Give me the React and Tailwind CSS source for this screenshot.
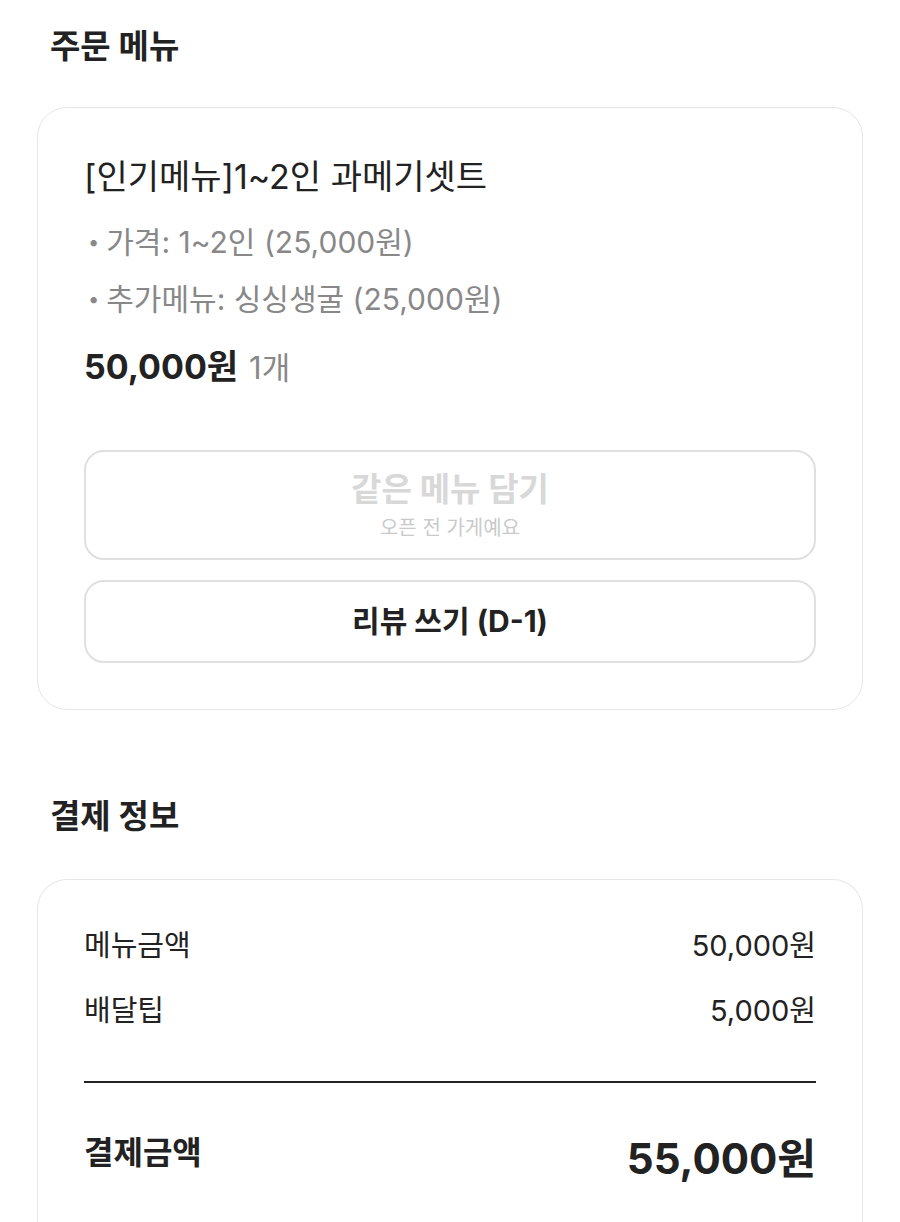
import React from 'react';

const options = [
  '가격: 1~2인 (25,000원)',
  '추가메뉴: 싱싱생굴 (25,000원)',
];

const payments = [
  { label: '메뉴금액', value: '50,000원' },
  { label: '배달팁', value: '5,000원' },
];

const App = () => {
  return (
    <div
      className="min-h-screen bg-white px-[37px] pt-[22px] text-[#222]"
      style={{ fontFamily: 'Inter, "Noto Sans CJK KR", "Noto Sans", sans-serif' }}
    >
      {/* 주문 메뉴 */}
      <h2 className="pl-[13px] text-[33px] font-bold leading-[48px]">주문 메뉴</h2>

      <div className="mt-[37px] rounded-[30px] border border-[#e6e6e6] px-[46px] pt-[47px] pb-[46px]">
        <p className="text-[34px] leading-[44px]">[인기메뉴]1~2인 과메기셋트</p>

        <ul className="mt-[21px] flex flex-col gap-[13px]">
          {options.map((opt) => (
            <li key={opt} className="flex items-center text-[30px] leading-[44px] text-[#888]">
              <span className="mr-[7px] pl-[4px] text-[20px]">•</span>
              {opt}
            </li>
          ))}
        </ul>

        <p className="mt-[24px] leading-[44px]">
          <span className="text-[34px] font-bold">50,000원</span>
          <span className="ml-[11px] text-[31px] text-[#888]">1개</span>
        </p>

        <button className="mt-[55px] flex h-[110px] w-full flex-col items-center justify-center rounded-[20px] border-2 border-[#e0e0e0]">
          <span className="text-[33px] font-bold leading-[42px] text-[#d8d8d8]">같은 메뉴 담기</span>
          <span className="mt-[4px] text-[20px] leading-[28px] text-[#cacaca]">오픈 전 가게예요</span>
        </button>

        <button className="mt-[20px] flex h-[83px] w-full items-center justify-center rounded-[20px] border-2 border-[#e0e0e0] text-[30px] font-bold">
          리뷰 쓰기 (D-1)
        </button>
      </div>

      {/* 결제 정보 */}
      <h2 className="mt-[82px] pl-[13px] text-[33px] font-bold leading-[48px]">결제 정보</h2>

      <div className="mt-[39px] rounded-t-[30px] border border-b-0 border-[#e6e6e6] px-[46px] pt-[46px] pb-[60px]">
        <div className="flex flex-col gap-[25px]">
          {payments.map((row) => (
            <div key={row.label} className="flex items-center justify-between text-[29px] leading-[40px]">
              <span>{row.label}</span>
              <span>{row.value}</span>
            </div>
          ))}
        </div>

        <div className="mt-[50px] h-[2px] bg-[#222]" />

        <div className="mt-[36px] flex items-center justify-between">
          <span className="text-[32px] font-bold leading-[56px]">결제금액</span>
          <span className="pt-[12px] text-[42px] font-bold leading-[56px]">55,000원</span>
        </div>
      </div>
    </div>
  );
};

export default App;
